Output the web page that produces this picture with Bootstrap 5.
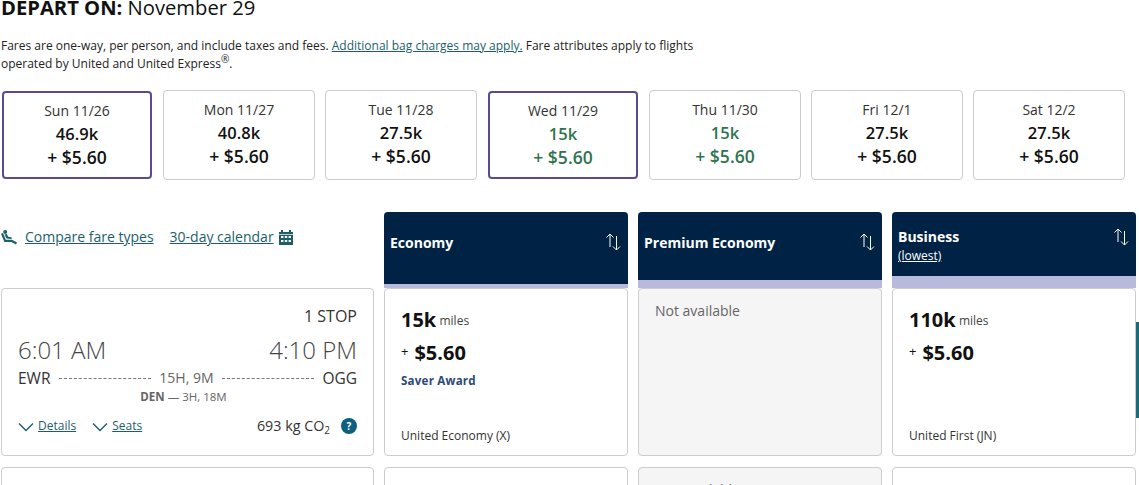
<!DOCTYPE html>
<html lang="en">
<head>
<meta charset="utf-8">
<title>Depart on November 29</title>
<link href="https://cdn.jsdelivr.net/npm/bootstrap@5.3.0/dist/css/bootstrap.min.css" rel="stylesheet">
<style>
html,body{height:485px;overflow:hidden;background:#fff}
body{font-family:"Open Sans",sans-serif;color:#1d1d1d;position:relative}
a{color:#1c5f6b}
.pg{padding-left:1px}
.ttl{font-size:20.2px;line-height:24px;margin:-5px 0 0 0;font-weight:400;color:#111}
.ttl b{font-weight:700}
.fine{font-size:12px;line-height:18px;margin:18px 0 0;width:700px;color:#222}
.fine sup{font-size:10px;top:-.5em;line-height:0}
.dates{gap:10px;margin-top:17px}
.dcard{width:152px;height:90px;border:1px solid #ccc;border-radius:4px;text-align:center;padding-top:9px;background:#fff;color:#111}
.dcard.sel{width:150px;height:88px;margin:1px;border:2px solid #5b4a91;padding-top:8px}
.dlabel{font-size:14px;line-height:20px;color:#333}
.dmiles,.dcash{font-size:16.5px;font-weight:600;line-height:24px;color:#111}
.dcash{font-size:17.5px;line-height:23px}
.dmiles{margin-top:1px}
.grn .dmiles,.grn .dcash{color:#2f7350}
.fgrid{display:grid;grid-template-columns:373px 244px 244px 244px;column-gap:10px;margin-top:32px}
.tools{height:76px;padding-top:15px;font-size:14px;line-height:20px;gap:16px}
.seatlink{gap:7px}
.fhead{height:76px;background:#b9b9dc;border-radius:4px 4px 0 0;overflow:hidden;color:#fff}
.fband{background:#002244;padding:21px 6px 0;font-size:14px;font-weight:700;line-height:19px}
.b-eco{height:72px}.b-pre{height:68px}.b-bus{height:64px;padding-top:15px}
.fband small{display:block;font-size:12px;font-weight:400;line-height:19px}
.fband a{color:#fff}
.farrows{margin:-1px 0 0}
.bus-arrows{margin-top:0}
.flcard{height:168px;border:1px solid #ccc;border-radius:4px;padding:16px;background:#fff;color:#333}
.stop{text-align:right;font-size:16px;line-height:22px}
.times{font-size:24px;font-weight:300;line-height:30px;margin-top:8px;color:#444}
.route{font-size:15.500px;line-height:20px;gap:8px;margin-top:3px}
.dur{font-size:14px;color:#666;white-space:nowrap}
.dash{flex:1;border-top:1px dashed #777;height:0}
.lay{font-size:11.500px;line-height:16px;text-align:center;color:#666;margin-top:1px;padding-right:8px}
.lay b{font-weight:700}
.flinks{font-size:12px;line-height:16px;margin-top:13px}
.flinks svg{margin-right:4px}
.co2{font-size:14.300px;color:#333;gap:11px}
.co2 sub{font-size:10px}
.qmark{width:16px;height:16px;border-radius:50%;background:#0c5f7e;color:#fff;font-size:10px;font-weight:700;line-height:16px;text-align:center}
.fcard{height:168px;border:1px solid #ccc;border-radius:4px;padding:17px 16px 11px;background:#fff;color:#111}
.fcard.na{background:#f5f5f5;padding-top:11px;font-size:14px;color:#666;line-height:22px}
.mil{font-size:20px;font-weight:700;line-height:28px}
.mil small{font-size:12px;font-weight:400;color:#444;vertical-align:2px;margin-left:-2px}
.cash{font-size:20px;font-weight:700;line-height:26px;margin-top:3px}
.cash small{font-size:13px;font-weight:400;vertical-align:4px;margin-right:6px}
.saver{font-size:11.600px;font-weight:700;color:#2c4a78;line-height:18px;margin-top:6px;letter-spacing:.2px}
.cabin{font-size:12px;line-height:16px;color:#333}
.next{height:60px;margin-top:11px}
.nx{border:1px solid #ccc;border-radius:4px 4px 0 0;height:80px;background:#fff}
.nx.na{background:#f5f5f5;padding:11px 16px;font-size:14px;color:#666;line-height:22px}
.sidebar{position:absolute;right:0;top:322px;width:3px;height:96px;background:#1c6b78}
</style>
</head>
<body>
<div class="pg">
  <h1 class="ttl"><b>DEPART ON:</b> November 29</h1>
  <p class="fine">Fares are one-way, per person, and include taxes and fees. <a href="#">Additional bag charges may apply.</a> Fare attributes apply to flights operated by United and United Express<sup>®</sup>.</p>

  <div class="dates d-flex">
    <div class="dcard sel"><div class="dlabel">Sun 11/26</div><div class="dmiles">46.9k</div><div class="dcash">+ $5.60</div></div>
    <div class="dcard"><div class="dlabel">Mon 11/27</div><div class="dmiles">40.8k</div><div class="dcash">+ $5.60</div></div>
    <div class="dcard"><div class="dlabel">Tue 11/28</div><div class="dmiles">27.5k</div><div class="dcash">+ $5.60</div></div>
    <div class="dcard sel grn"><div class="dlabel">Wed 11/29</div><div class="dmiles">15k</div><div class="dcash">+ $5.60</div></div>
    <div class="dcard grn"><div class="dlabel">Thu 11/30</div><div class="dmiles">15k</div><div class="dcash">+ $5.60</div></div>
    <div class="dcard"><div class="dlabel">Fri 12/1</div><div class="dmiles">27.5k</div><div class="dcash">+ $5.60</div></div>
    <div class="dcard"><div class="dlabel">Sat 12/2</div><div class="dmiles">27.5k</div><div class="dcash">+ $5.60</div></div>
  </div>

  <div class="fgrid">
    <div class="tools d-flex align-items-start">
      <div class="seatlink d-flex align-items-center">
        <svg width="17" height="15" viewBox="0 0 17 15" aria-hidden="true"><circle cx="4.200" cy="2" r="2" fill="#1c5f6b"/><path d="M0 3.800 2 3l2.800 6.800H11l5 2.800-1 1.900-4.700-2.500H3.400z" fill="#1c5f6b"/><path d="M3.500 4.500 5.800 4l1.400 2.800 3.400.4V9L5.500 8.600z" fill="#1c5f6b"/></svg>
        <a href="#">Compare fare types</a>
      </div>
      <div class="d-flex align-items-center gap-1">
        <a href="#">30-day calendar</a>
        <svg width="16" height="16" viewBox="0 0 16 16" aria-hidden="true"><path fill="#1c5f6b" d="M1 3h2V1h2v2h6V1h2v2h2v13H1z"/><g fill="#fff"><rect x="3" y="7" width="2.400" height="2"/><rect x="6.800" y="7" width="2.400" height="2"/><rect x="10.600" y="7" width="2.400" height="2"/><rect x="3" y="11" width="2.400" height="2"/><rect x="6.800" y="11" width="2.400" height="2"/><rect x="10.600" y="11" width="2.400" height="2"/><rect x="1" y="5" width="14" height=".7"/></g></svg>
      </div>
    </div>
    <div class="fhead"><div class="fband b-eco d-flex justify-content-between"><span>Economy</span><svg class="farrows" width="18" height="20" viewBox="0 0 18 20" aria-hidden="true"><path d="M6 15V2M2.500 5.500 6 2l3.500 3.500M12.500 4v14M9 14.500l3.500 3.500 3.500-3.500" fill="none" stroke="#fff" stroke-width="1"/></svg></div></div>
    <div class="fhead"><div class="fband b-pre d-flex justify-content-between"><span>Premium Economy</span><svg class="farrows" width="18" height="20" viewBox="0 0 18 20" aria-hidden="true"><path d="M6 15V2M2.500 5.500 6 2l3.500 3.500M12.500 4v14M9 14.500l3.500 3.500 3.500-3.500" fill="none" stroke="#fff" stroke-width="1"/></svg></div></div>
    <div class="fhead"><div class="fband b-bus d-flex justify-content-between"><span>Business<small><a href="#">(lowest)</a></small></span><svg class="farrows bus-arrows" width="18" height="20" viewBox="0 0 18 20" aria-hidden="true"><path d="M6 15V2M2.500 5.500 6 2l3.500 3.500M12.500 4v14M9 14.500l3.500 3.500 3.500-3.500" fill="none" stroke="#fff" stroke-width="1"/></svg></div></div>

    <div class="flcard">
      <div class="stop">1 STOP</div>
      <div class="times d-flex justify-content-between"><span>6:01 AM</span><span>4:10 PM</span></div>
      <div class="route d-flex align-items-center"><span>EWR</span><span class="dash"></span><span class="dur">15H, 9M</span><span class="dash"></span><span>OGG</span></div>
      <div class="lay"><b>DEN</b> — 3H, 18M</div>
      <div class="flinks d-flex justify-content-between align-items-center">
        <div class="d-flex gap-3">
          <span><svg width="16" height="10" viewBox="0 0 16 10" aria-hidden="true"><path d="M1 1.500 8 8.500l7-7" fill="none" stroke="#1c5f6b" stroke-width="1.400"/></svg><a href="#">Details</a></span>
          <span><svg width="16" height="10" viewBox="0 0 16 10" aria-hidden="true"><path d="M1 1.500 8 8.500l7-7" fill="none" stroke="#1c5f6b" stroke-width="1.400"/></svg><a href="#">Seats</a></span>
        </div>
        <div class="co2 d-flex align-items-center"><span>693 kg CO<sub>2</sub></span><span class="qmark">?</span></div>
      </div>
    </div>
    <div class="fcard d-flex flex-column">
      <div class="mil">15k <small>miles</small></div>
      <div class="cash"><small>+</small>$5.60</div>
      <div class="saver">Saver Award</div>
      <div class="cabin mt-auto">United Economy (X)</div>
    </div>
    <div class="fcard na">Not available</div>
    <div class="fcard d-flex flex-column">
      <div class="mil">110k <small>miles</small></div>
      <div class="cash"><small>+</small>$5.60</div>
      <div class="cabin mt-auto">United First (JN)</div>
    </div>

    <div class="next"><div class="nx"></div></div>
    <div class="next"><div class="nx"></div></div>
    <div class="next"><div class="nx na">Not available</div></div>
    <div class="next"><div class="nx"></div></div>
  </div>
</div>
<div class="sidebar"></div>
<script src="https://cdn.jsdelivr.net/npm/bootstrap@5.3.0/dist/js/bootstrap.bundle.min.js"></script>
</body>
</html>
